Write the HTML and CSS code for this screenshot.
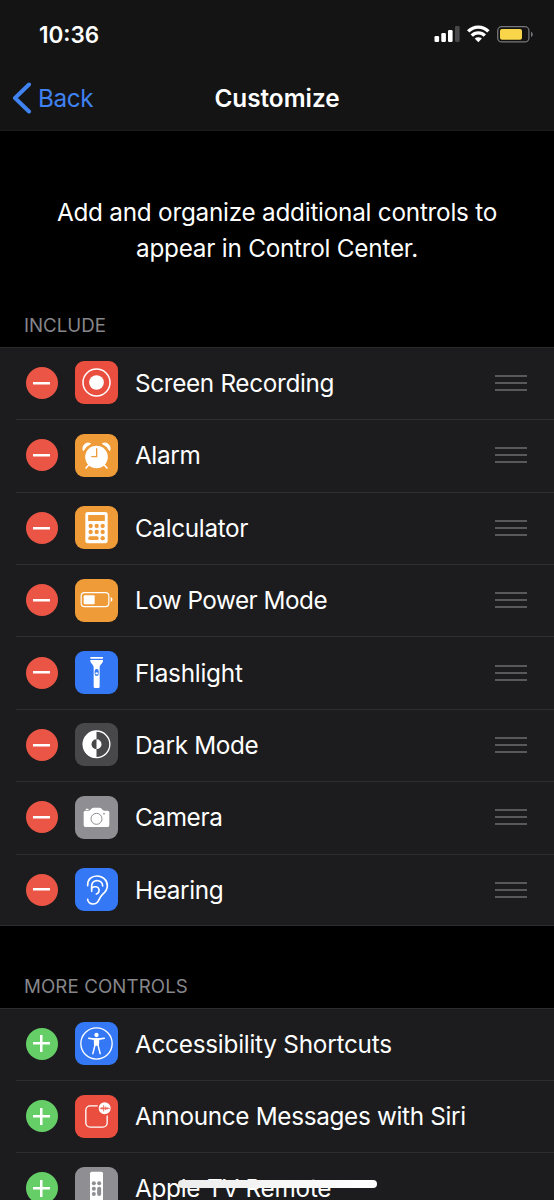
FILE: index.html
```html
<!DOCTYPE html>
<html lang="en">
<head>
<meta charset="utf-8">
<title>Customize</title>
<link rel="stylesheet" href="styles.css">
</head>
<body>
<div class="screen">
  <header class="top">
    <div class="status">
      <span class="time">10:36</span>
      <svg class="indicators" viewBox="0 0 100 20" fill="#fff">
        <rect x="0.5" y="12" width="4.6" height="6" rx="1.2"/>
        <rect x="7.3" y="9" width="4.6" height="9" rx="1.2"/>
        <rect x="14" y="6" width="4.6" height="12" rx="1.2"/>
        <rect x="21" y="2" width="4.6" height="16" rx="1.2" fill="#48484a"/>
        <g fill="none" stroke="#fff" stroke-width="3.4">
          <path d="M34.2 7.400a14 14 0 0 1 20.2 0"/>
          <path d="M37.800 11.600a9.200 9.200 0 0 1 13 0"/>
        </g>
        <path d="M40.700 14.600a5.200 5.200 0 0 1 7.200 0l-3.600 3.700z"/>
        <rect x="63.7" y="2.700" width="31.2" height="15.2" rx="4" fill="none" stroke="#77777a" stroke-width="1.3"/>
        <rect x="66" y="5" width="22" height="10.8" rx="2" fill="#f8d549"/>
        <path d="M97 7.700c2.300.8 2.300 4.400 0 5.200z" fill="#77777a"/>
      </svg>
    </div>
    <nav class="nav">
      <a class="back"><svg class="chevron" viewBox="0 0 20 32"><path d="M17 2.500L3 16l14 13.500"/></svg><span>Back</span></a>
      <h1 class="title">Customize</h1>
    </nav>
  </header>

  <p class="intro">Add and organize additional controls to<br>appear in Control Center.</p>

  <h2 class="heading">INCLUDE</h2>
  <ul class="list">
    <li class="row">
      <span class="toggle remove"></span>
      <svg class="icon red" viewBox="0 0 129 129"><circle cx="64.500" cy="64.500" r="40.500" fill="none" stroke="#fff" stroke-width="4.500"/><circle cx="64.500" cy="64.500" r="22" fill="#fff"/></svg>
      <div class="cell"><span class="label">Screen Recording</span><span class="grip"></span></div>
    </li>
    <li class="row">
      <span class="toggle remove"></span>
      <svg class="icon orange" viewBox="0 0 129 129">
        <g fill="#fff"><path d="M25 50C20 36 32 22 47 29Q32 36 25 50z" stroke="#fff" stroke-width="3" stroke-linejoin="round"/><path d="M104 50C109 36 97 22 82 29Q97 36 104 50z" stroke="#fff" stroke-width="3" stroke-linejoin="round"/></g>
        <path d="M41 93l-8 9M88 93l8 9" stroke="#fff" stroke-width="5" stroke-linecap="round"/>
        <circle cx="64.500" cy="69" r="34" fill="#fff"/>
        <path d="M65 43v25H49" fill="none" stroke="#ee9b38" stroke-width="4"/>
      </svg>
      <div class="cell"><span class="label">Alarm</span><span class="grip"></span></div>
    </li>
    <li class="row">
      <span class="toggle remove"></span>
      <svg class="icon orange" viewBox="0 0 129 129" fill="#ee9b38">
        <rect x="31" y="18" width="67" height="94" rx="7" fill="#fff"/>
        <rect x="39.500" y="27" width="50" height="18" rx="1"/>
        <circle cx="47" cy="60" r="6.500"/><circle cx="65" cy="60" r="6.500"/><circle cx="83" cy="60" r="6.500"/>
        <circle cx="47" cy="78" r="6.500"/><circle cx="65" cy="78" r="6.500"/><circle cx="83" cy="78" r="6.500"/>
        <rect x="40" y="91" width="31" height="11" rx="5.500"/><circle cx="83" cy="96.500" r="6.500"/>
      </svg>
      <div class="cell"><span class="label">Calculator</span><span class="grip"></span></div>
    </li>
    <li class="row">
      <span class="toggle remove"></span>
      <svg class="icon orange" viewBox="0 0 129 129" fill="#fff">
        <rect x="18.500" y="41" width="83" height="42" rx="10" fill="none" stroke="#fff" stroke-width="3.500"/>
        <rect x="26" y="49" width="33" height="27" rx="3"/>
        <path d="M107 54c7 2 7 13 0 15z"/>
      </svg>
      <div class="cell"><span class="label tight">Low Power Mode</span><span class="grip"></span></div>
    </li>
    <li class="row">
      <span class="toggle remove"></span>
      <svg class="icon blue" viewBox="0 0 129 129" fill="#fff">
        <rect x="46" y="18" width="38" height="5" rx="1"/>
        <path d="M46 27h38v3c0 6-10 11-10 20v57q0 4-4 4H60q-4 0-4-4V50c0-9-10-14-10-20z"/>
        <rect x="59" y="54" width="12" height="21" rx="6" fill="#3478f6"/><circle cx="65" cy="67" r="3.600"/>
      </svg>
      <div class="cell"><span class="label wide">Flashlight</span><span class="grip"></span></div>
    </li>
    <li class="row">
      <span class="toggle remove"></span>
      <svg class="icon dark" viewBox="0 0 129 129">
        <circle cx="64.500" cy="64" r="40" fill="none" stroke="#fff" stroke-width="4"/>
        <path d="M64.500 23v26a15 15 0 0 0 0 30v26a41 41 0 0 1 0-82z" fill="#fff"/>
        <path d="M64.500 49a15 15 0 0 1 0 30z" fill="#fff"/>
      </svg>
      <div class="cell"><span class="label">Dark Mode</span><span class="grip"></span></div>
    </li>
    <li class="row">
      <span class="toggle remove"></span>
      <svg class="icon gray" viewBox="0 0 129 129" fill="#fff">
        <path d="M31 44h10q5 0 7-4 2-5 7-5h19q5 0 7 5 2 4 7 4h10q5 0 5 5v39q0 5-5 5H31q-5 0-5-5V49q0-5 5-5z"/>
        <rect x="32" y="38" width="9" height="4" rx="2"/>
        <circle cx="64.500" cy="68.500" r="16.500" fill="none" stroke="#8e8e93" stroke-width="3"/>
        <circle cx="87" cy="53" r="2.500" fill="#8e8e93"/>
      </svg>
      <div class="cell"><span class="label">Camera</span><span class="grip"></span></div>
    </li>
    <li class="row">
      <span class="toggle remove"></span>
      <svg class="icon blue" viewBox="0 0 129 129">
        <g fill="none" stroke="#fff" stroke-width="5" stroke-linecap="round">
          <path d="M38 53C37 34 50 24 66 24c18 0 31 13 31 29 0 12-7 20-15 27-6 6-8 11-11 17-4 8-10 11-17 11-9 0-16-6-16-14"/>
          <path d="M50 70V54c0-10 7-16 16-16 10 0 17 7 17 16"/>
          <path d="M50 60c8-6 20-5 22 4 1 7-3 12-8 14"/>
        </g>
      </svg>
      <div class="cell"><span class="label">Hearing</span><span class="grip"></span></div>
    </li>
  </ul>

  <h2 class="heading more">MORE CONTROLS</h2>
  <ul class="list">
    <li class="row">
      <span class="toggle add"></span>
      <svg class="icon blue" viewBox="0 0 129 129">
        <circle cx="64.500" cy="64.500" r="47" fill="none" stroke="#fff" stroke-width="4"/>
        <circle cx="64.500" cy="39" r="6.500" fill="#fff"/>
        <path d="M41 49q23 5 47 0M60 69l-6.500 26M69 69l6.500 26" fill="none" stroke="#fff" stroke-width="4.500" stroke-linecap="round"/>
        <path d="M56 49h17l-1 22h-15z" fill="#fff"/>
      </svg>
      <div class="cell"><span class="label wide">Accessibility Shortcuts</span></div>
    </li>
    <li class="row">
      <span class="toggle add"></span>
      <svg class="icon red" viewBox="0 0 129 129">
        <rect x="32.500" y="32.500" width="64" height="64" rx="13" fill="none" stroke="#fff" stroke-width="4"/>
        <circle cx="89" cy="40" r="20.500" fill="#fff" stroke="#e94e3f" stroke-width="5"/>
        <path d="M75 40h28M81 37v6M86 32v16M91 36v8M96 37v6" stroke="#e94e3f" stroke-width="2.500" stroke-linecap="round"/>
      </svg>
      <div class="cell"><span class="label">Announce Messages with Siri</span></div>
    </li>
    <li class="row">
      <span class="toggle add"></span>
      <svg class="icon gray" viewBox="0 0 129 129" fill="#8e8e93">
        <rect x="45" y="14" width="39" height="105" rx="5" fill="#fff"/>
        <circle cx="56.500" cy="49" r="6"/><circle cx="72.500" cy="49" r="6"/><circle cx="56.500" cy="65" r="6"/><circle cx="56.500" cy="81" r="6"/>
        <rect x="66.500" y="59" width="12" height="28" rx="6"/>
      </svg>
      <div class="cell"><span class="label wide">Apple TV Remote</span></div>
    </li>
  </ul>
  <div class="home-indicator"></div>
</div>
</body>
</html>
```
FILE: styles.css
```css
* { box-sizing: border-box; }
body { margin: 0; background: #000; }
.screen {
  position: relative;
  width: 554px;
  height: 1200px;
  overflow: hidden;
  background: #000;
  color: #fff;
  font-family: Inter, "Liberation Sans", sans-serif;
  font-size: 24.3px;
}
.top { height: 131px; background: #141414; border-bottom: 1px solid #1c1c1d; }
.status {
  display: flex;
  justify-content: space-between;
  align-items: center;
  height: 68px;
  padding: 0 20px 0 39px;
}
.time { font-size: 22.5px; font-weight: 600; }
.indicators { width: 100px; height: 20px; }
.nav {
  display: grid;
  grid-template-columns: 1fr auto 1fr;
  align-items: center;
  height: 60px;
  padding-left: 12px;
  padding-right: 12px;
}
.back { display: flex; align-items: center; gap: 6px; color: #3f82f0; letter-spacing: -0.4px; }
.chevron { width: 20px; height: 32px; fill: none; stroke: #3f82f0; stroke-width: 4; stroke-linecap: round; stroke-linejoin: round; }
.title { margin: 0; font-size: 24.3px; font-weight: 600; }
.intro { height: 72px; margin: 63px 0 0; text-align: center; line-height: 36px; letter-spacing: -0.24px; white-space: nowrap; }
.heading {
  display: flex;
  align-items: flex-end;
  height: 80.8px;
  margin: 0;
  padding: 0 0 9px 24px;
  color: #86868b;
  font-size: 18.7px;
  font-weight: 400;
  line-height: 24px;
}
.heading.more { height: 81.6px; letter-spacing: 0.1px; }
.list {
  margin: 0;
  padding: 0;
  list-style: none;
  background: linear-gradient(#2c2c2e, #2c2c2e) top / 100% 1px no-repeat, linear-gradient(#2c2c2e, #2c2c2e) bottom / 100% 1px no-repeat, #1c1c1e;
}
.row {
  display: flex;
  align-items: center;
  height: 72.4px;
  margin-left: 16px;
  padding-left: 9.6px;
}
.row + .row { background: linear-gradient(#2e2e30, #2e2e30) top / 100% 1px no-repeat; }
.toggle {
  flex: none;
  width: 32px;
  height: 32px;
  margin-right: 17.8px;
  border-radius: 50%;
}
.remove { background: linear-gradient(#fff, #fff) center / 17px 2.5px no-repeat, #ea5545; }
.add { background: linear-gradient(#fff, #fff) center / 17px 2.5px no-repeat, linear-gradient(#fff, #fff) center / 2.5px 17px no-repeat, #65ce67; }
.icon { flex: none; width: 43px; height: 43px; border-radius: 9px; }
.red { background: #e94e3f; }
.orange { background: #ee9b38; }
.blue { background: #3478f6; }
.dark { background: #48484a; }
.gray { background: #8e8e93; }
.cell {
  display: flex;
  flex: 1;
  align-items: center;
  justify-content: space-between;
  padding: 0 26.8px 0 16.5px;
}
.label { letter-spacing: -0.32px; white-space: nowrap; }
.label.tight { letter-spacing: -0.5px; }
.label.wide { letter-spacing: -0.23px; }
.grip {
  width: 32px;
  height: 16px;
  background: linear-gradient(#59595b, #59595b) 0 0 / 100% 2px no-repeat, linear-gradient(#59595b, #59595b) center / 100% 2px no-repeat, linear-gradient(#59595b, #59595b) 0 100% / 100% 2px no-repeat;
}
.home-indicator {
  position: absolute;
  left: 178px;
  top: 1180px;
  width: 199px;
  height: 8px;
  border-radius: 4px;
  background: linear-gradient(90deg, #ececec, #fff);
}
```
